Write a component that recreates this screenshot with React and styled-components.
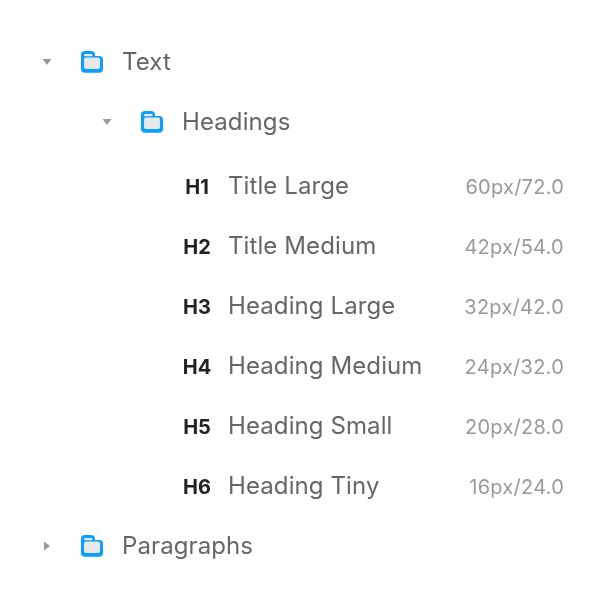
import React from 'react';
import styled, { createGlobalStyle } from 'styled-components';

const Global = createGlobalStyle`
  html, body {
    margin: 0;
    background: #ffffff;
  }
  body {
    font-family: Inter, "Liberation Sans", sans-serif;
    font-optical-sizing: none;
  }
`;

const Tree = styled.div`
  width: 614px;
  height: 608px;
  box-sizing: border-box;
  padding: 32px 50px 0 0;
  will-change: transform;
`;

const Row = styled.div`
  display: flex;
  align-items: center;
  height: 60px;
  padding-left: ${(p) => p.$indent}px;
`;

const Headings = styled.div`
  padding-top: 4px;
`;

const HeadingRow = styled.div`
  display: flex;
  align-items: baseline;
  box-sizing: border-box;
  height: 60px;
  padding: 14px 0 0 182px;
`;

const Caret = styled.span`
  display: flex;
  justify-content: center;
  align-items: center;
  width: 12px;
  height: 12px;
  margin-right: 27px;
`;

const FolderIcon = styled.svg`
  width: 24px;
  height: 24px;
  margin-right: 18px;
  flex: none;
`;

const Label = styled.span`
  font-size: 24px;
  line-height: 32px;
  letter-spacing: 0.1px;
  color: #666666;
  flex: 1;
`;

const Tag = styled.span`
  width: 30px;
  margin-right: 16px;
  font-size: 20px;
  font-weight: 700;
  line-height: 28px;
  color: #222222;
  text-align: center;
`;

const Size = styled.span`
  font-size: 20px;
  line-height: 28px;
  letter-spacing: 0.25px;
  color: #999999;
`;

const Arrow = ({ open }) => (
  <Caret>
    <svg width="12" height="12" viewBox="0 0 12 12">
      {open ? <path d="M1.5 3h9L6 9z" fill="#999999" /> : <path d="M3 1.5v9L9 6z" fill="#999999" />}
    </svg>
  </Caret>
);

const Folder = () => (
  <FolderIcon viewBox="0 0 24 24">
    <path
      d="M1 5a4 4 0 0 1 4-4h6a4 4 0 0 1 4 4v1h4a4 4 0 0 1 4 4v8.75a4 4 0 0 1-4 4H5a4 4 0 0 1-4-4z"
      fill="#0a9fff"
    />
    <rect x="4" y="4" width="8.5" height="2.2" rx="1" fill="#e8e8e8" />
    <rect x="4" y="7.6" width="16" height="11.4" rx="2" fill="#e8e8e8" />
  </FolderIcon>
);

const headings = [
  ['H1', 'Title Large', '60px/72.0'],
  ['H2', 'Title Medium', '42px/54.0'],
  ['H3', 'Heading Large', '32px/42.0'],
  ['H4', 'Heading Medium', '24px/32.0'],
  ['H5', 'Heading Small', '20px/28.0'],
  ['H6', 'Heading Tiny', '16px/24.0'],
];

export default function App() {
  return (
    <>
      <Global />
      <Tree>
        <Row $indent={41}>
          <Arrow open />
          <Folder />
          <Label>Text</Label>
        </Row>
        <Row $indent={101}>
          <Arrow open />
          <Folder />
          <Label>Headings</Label>
        </Row>
        <Headings>
          {headings.map(([tag, name, size]) => (
            <HeadingRow key={tag}>
              <Tag>{tag}</Tag>
              <Label>{name}</Label>
              <Size>{size}</Size>
            </HeadingRow>
          ))}
        </Headings>
        <Row $indent={41}>
          <Arrow />
          <Folder />
          <Label>Paragraphs</Label>
        </Row>
      </Tree>
    </>
  );
}
